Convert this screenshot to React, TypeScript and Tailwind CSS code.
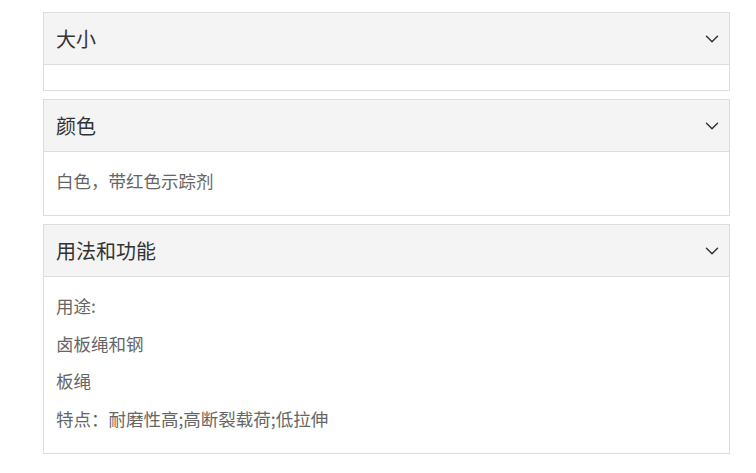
import { ChevronDown } from 'lucide-react'

type Section = { title: string; lines: string[] }

const sections: Section[] = [
  { title: '大小', lines: [] },
  { title: '颜色', lines: ['白色，带红色示踪剂'] },
  { title: '用法和功能', lines: ['用途:', '卤板绳和钢', '板绳', '特点：耐磨性高;高断裂载荷;低拉伸'] },
]

function Panel({ title, lines }: Section) {
  return (
    <div className="border border-[#dddddd] bg-white">
      <div className="h-[52px] bg-[#f4f4f4] border-b border-[#dddddd] flex items-center justify-between pl-[12px] pr-[6px]">
        <span className="text-[20px] text-[#333333]">{title}</span>
        <ChevronDown className="w-[22px] h-[22px] text-[#333333]" strokeWidth={1.6} />
      </div>
      {lines.length === 0 ? (
        <div className="h-[25px]" />
      ) : (
        <div className="pt-[17px] pb-[22px] px-[12px] flex flex-col gap-[13.5px]">
          {lines.map((l) => (
            <p key={l} className="text-[17.5px] leading-6 text-[#666666]">{l}</p>
          ))}
        </div>
      )}
    </div>
  )
}

export default function App() {
  return (
    <div
      className="min-h-screen bg-white pt-[12px]"
      style={{ fontFamily: '"Noto Sans CJK SC", "Noto Sans", sans-serif' }}
    >
      <div className="ml-[43px] w-[687px] flex flex-col gap-[8px]">
        {sections.map((s) => (
          <Panel key={s.title} {...s} />
        ))}
      </div>
    </div>
  )
}
